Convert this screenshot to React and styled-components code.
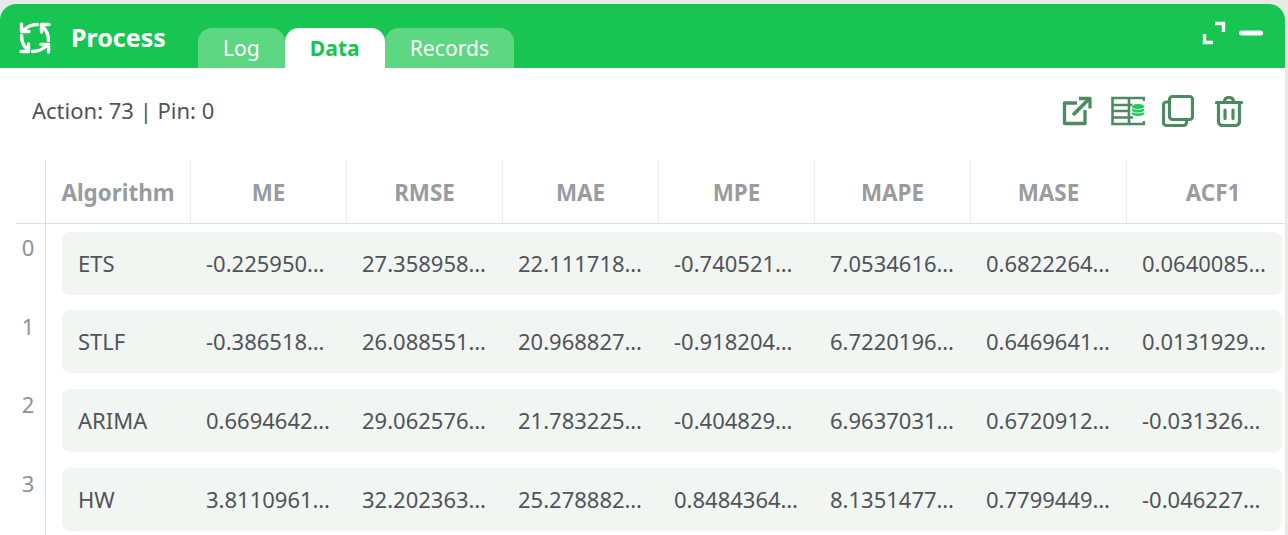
import React from 'react';
import styled, { createGlobalStyle } from 'styled-components';

const Global = createGlobalStyle`
  html, body { margin: 0; padding: 0; height: 100%; overflow: hidden; background: #e6ebe8; }
  body { font-family: "Noto Sans", "Liberation Sans", sans-serif; }
`;

const Panel = styled.div`
  margin-top: 4px;
  width: 1285px;
  height: 531px;
  background: #fff;
  border-radius: 16px 16px 0 0;
  overflow: hidden;
`;

const Header = styled.div`
  height: 64px;
  background: #19c552;
  display: flex;
  align-items: flex-end;
  padding: 0 22px 0 18px;
`;

const Title = styled.div`
  display: flex;
  align-items: center;
  align-self: flex-start;
  gap: 19px;
  height: 66px;
  width: 180px;
  color: #fff;
  font-size: 25px;
  font-weight: 700;
  svg { flex: none; margin-top: 2px; }
`;

const Tabs = styled.div`
  display: flex;
  flex: 1;
`;

const Tab = styled.div`
  height: 40px;
  line-height: 40px;
  padding: 0 25px;
  border-radius: 14px 14px 0 0;
  font-size: 21.12px;
  font-weight: ${p => (p.$active ? 700 : 400)};
  color: ${p => (p.$active ? '#19c552' : '#fff')};
  background: ${p => (p.$active ? '#fff' : '#5dd782')};
`;

const WindowButtons = styled.div`
  display: flex;
  align-self: flex-start;
  align-items: center;
  gap: 13px;
  height: 58px;
`;

const Toolbar = styled.div`
  height: 92px;
  display: flex;
  align-items: center;
  justify-content: space-between;
  padding: 0 31px 6px 32px;
  box-sizing: border-box;
  color: #50535a;
  font-size: 22px;
  span { margin-top: -2px; }
`;

const Actions = styled.div`
  display: flex;
  align-items: center;
`;

const IconButton = styled.div`
  width: 50.5px;
  display: flex;
  justify-content: center;
`;

const Table = styled.div`
  margin-left: 16px;
`;

const HeadRow = styled.div`
  display: flex;
  height: 64px;
  border-bottom: 1px solid #e0e0e0;
  box-sizing: border-box;
`;

const Corner = styled.div`
  width: 30px;
  flex: none;
  border-right: 1px solid #e0e0e0;
  box-sizing: border-box;
`;

const HeadCell = styled.div`
  width: ${p => p.$w}px;
  flex: none;
  box-sizing: border-box;
  display: flex;
  align-items: center;
  justify-content: center;
  padding-top: 2px;
  border-right: ${p => (p.$last ? 'none' : '1px solid #ececec')};
  color: #999ba0;
  font-size: 22.4px;
  font-weight: 700;
`;

const Body = styled.div`
  display: flex;
`;

const IndexCol = styled.div`
  width: 30px;
  flex: none;
  border-right: 1px solid #e0e0e0;
  box-sizing: border-box;
`;

const Index = styled.div`
  height: 78.6px;
  padding: 8px 5px 0 0;
  box-sizing: border-box;
  text-align: center;
  color: #8f9296;
  font-size: 22px;
  line-height: 30px;
`;

const Rows = styled.div`
  flex: 1;
  padding: 7.8px 0 0 16px;
`;

const Row = styled.div`
  display: flex;
  width: 1220px;
  height: 63px;
  padding-bottom: 1px;
  box-sizing: border-box;
  margin-bottom: 15.6px;
  background: #f2f6f3;
  border-radius: 8px;
  align-items: center;
`;

const Cell = styled.div`
  width: ${p => p.$w}px;
  flex: none;
  box-sizing: border-box;
  padding: 0 16px;
  color: #50535a;
  font-size: 22px;
  white-space: nowrap;
  overflow: hidden;
  text-overflow: ellipsis;
`;

const columns = ['ME', 'RMSE', 'MAE', 'MPE', 'MAPE', 'MASE', 'ACF1'];

const data = [
  ['ETS', '-0.2259501234', '27.3589581234', '22.1117181234', '-0.7405211234', '7.05346161234', '0.68222641234', '0.06400851234'],
  ['STLF', '-0.3865181234', '26.0885511234', '20.9688271234', '-0.9182041234', '6.72201961234', '0.64696411234', '0.01319291234'],
  ['ARIMA', '0.66946421234', '29.0625761234', '21.7832251234', '-0.4048291234', '6.96370311234', '0.67209121234', '-0.0313261234'],
  ['HW', '3.81109611234', '32.2023631234', '25.2788821234', '0.84843641234', '8.13514771234', '0.77994491234', '-0.0462271234'],
];

// one of the four arrows, the other three are the same one turned round the middle
const arrow = 'M19.5 3.5 C14 3.5 9 5.5 5.5 9.5 M3.5 3 V10.5 H11';

const ProcessIcon = () => (
  <svg width="34" height="34" viewBox="0 0 34 34" fill="none" stroke="#fff" strokeWidth="3.4" strokeLinecap="round" strokeLinejoin="round">
    {[0, 90, 180, 270].map(a => (
      <path key={a} d={arrow} transform={`rotate(${-a} 17 17)`} />
    ))}
  </svg>
);

const ExpandIcon = () => (
  <svg width="24" height="24" viewBox="0 0 24 24" fill="none" stroke="#fff" strokeWidth="3.4">
    <path d="M13 2.5 H21.5 V11" />
    <path d="M2.5 13 V21.5 H11" />
  </svg>
);

const MinusIcon = () => (
  <svg width="24" height="6" viewBox="0 0 24 6">
    <rect x="0" y="0.5" width="24" height="5" rx="2.5" fill="#fff" />
  </svg>
);

const ExternalIcon = () => (
  <svg width="30" height="30" viewBox="0 0 30 30" fill="none" stroke="#4c8a60" strokeWidth="3.3" strokeLinejoin="round">
    <path d="M15 7 H2.5 V27.5 H23 V14" />
    <path d="M11 19 L27 3" strokeWidth="3.8" />
    <path d="M17 2.5 H28 V12.5" />
  </svg>
);

const TableIcon = () => (
  <svg width="34" height="30" viewBox="0 0 34 30" fill="none">
    <g stroke="#4c8a60" strokeWidth="2.6">
      <path d="M33 5 V2 H1.5 V28 H33 V25" />
      <path d="M1.5 9 H22 M1.5 15 H18 M1.5 21.5 H22 M18 2 V28" />
    </g>
    <g fill="#22c95c" stroke="#fff" strokeWidth="0.8">
      <ellipse cx="27" cy="17.5" rx="6.6" ry="3" />
      <ellipse cx="27" cy="14" rx="6.6" ry="3" />
      <ellipse cx="27" cy="10.5" rx="6.6" ry="3" />
    </g>
  </svg>
);

const CopyIcon = () => (
  <svg width="32" height="32" viewBox="0 0 32 32" fill="none" stroke="#4c8a60" strokeWidth="3.2" strokeLinejoin="round">
    <rect x="7.5" y="1.5" width="23" height="23" rx="3" />
    <path d="M7.5 7 H4.5 A3 3 0 0 0 1.5 10 V27.5 A3 3 0 0 0 4.5 30.5 H21.5 A3 3 0 0 0 24.5 27.5 V24.5" />
  </svg>
);

const TrashIcon = () => (
  <svg width="28" height="31" viewBox="0 0 28 31" fill="none" stroke="#4c8a60" strokeWidth="3.2" strokeLinecap="round" strokeLinejoin="round">
    <path d="M1.5 6.5 H26.5" />
    <path d="M9.5 6 C9.5 2.5 11 1.5 14 1.5 C17 1.5 18.5 2.5 18.5 6" />
    <path d="M3.5 7 V25.5 A4 4 0 0 0 7.5 29.5 H20.5 A4 4 0 0 0 24.5 25.5 V7" />
    <path d="M10 14 V22.5 M18 14 V22.5" />
  </svg>
);

export default function App() {
  return (
    <>
      <Global />
      <Panel>
        <Header>
          <Title>
            <ProcessIcon />
            Process
          </Title>
          <Tabs>
            <Tab>Log</Tab>
            <Tab $active>Data</Tab>
            <Tab>Records</Tab>
          </Tabs>
          <WindowButtons>
            <ExpandIcon />
            <MinusIcon />
          </WindowButtons>
        </Header>
        <Toolbar>
          <span>Action: 73 | Pin: 0</span>
          <Actions>
            <IconButton><ExternalIcon /></IconButton>
            <IconButton><TableIcon /></IconButton>
            <IconButton><CopyIcon /></IconButton>
            <IconButton><TrashIcon /></IconButton>
          </Actions>
        </Toolbar>
        <Table>
          <HeadRow>
            <Corner />
            <HeadCell $w={145}>Algorithm</HeadCell>
            {columns.map((c, i) => {
              const last = i === columns.length - 1;
              return <HeadCell key={c} $w={last ? 172 : 156} $last={last}>{c}</HeadCell>;
            })}
          </HeadRow>
          <Body>
            <IndexCol>
              {data.map((_, i) => <Index key={i}>{i}</Index>)}
            </IndexCol>
            <Rows>
              {data.map(row => (
                <Row key={row[0]}>
                  {row.map((v, i) => (
                    <Cell key={i} $w={i === 0 ? 128 : 156}>{v}</Cell>
                  ))}
                </Row>
              ))}
            </Rows>
          </Body>
        </Table>
      </Panel>
    </>
  );
}
